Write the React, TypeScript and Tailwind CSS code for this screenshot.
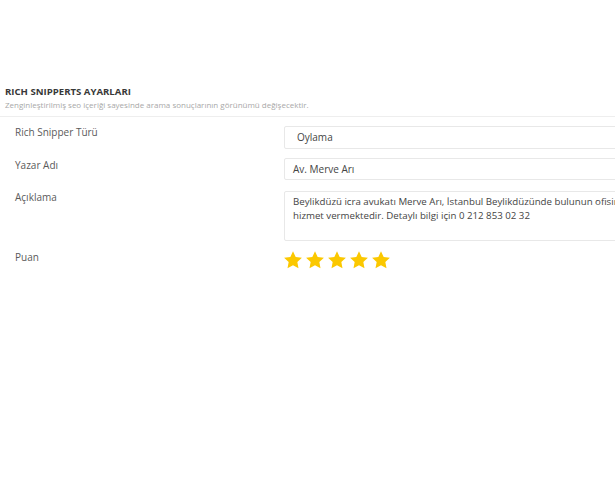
import React from 'react';

const Star: React.FC = () => (
  <svg viewBox="0 0 24 24" className="w-[20px] h-[20px]">
    <path
      d="M12 1.5l3.2 6.9 7.5.9-5.5 5.2 1.4 7.4L12 18.2l-6.6 3.7 1.4-7.4-5.5-5.2 7.5-.9z"
      fill="#fbc800"
    />
  </svg>
);

const App: React.FC = () => {
  return (
    <div
      className="w-[615px] h-[480px] overflow-hidden bg-white"
      style={{ fontFamily: '"Open Sans", "Liberation Sans", sans-serif' }}
    >
      <div className="pt-[86px]">
        <div className="pl-[5px]">
          <h3 className="text-[9.6px] leading-[12px] font-bold uppercase text-[#383838]">Rich Snipperts Ayarları</h3>
          <p className="text-[8px] leading-[11px] text-[#a8a8a8] mt-[1px]">
            Zenginleştirilmiş seo içeriği sayesinde arama sonuçlarının görünümü değişecektir.
          </p>
        </div>
        <div className="mt-[6px] border-t border-[#eeeeee]" />

        <div className="w-[800px] pt-[8px] flex flex-col">
          <div className="flex">
            <label className="w-[284px] pl-[15px] text-[10px] leading-[14px] text-[#5a5a5a] shrink-0">Rich Snipper Türü</label>
            <div className="w-[400px] h-[23px] mt-[1px] border border-[#e8e8e8] rounded-[2px] pl-[12px] flex items-center text-[10px] text-[#444]">
              Oylama
            </div>
          </div>

          <div className="flex mt-[9px]">
            <label className="w-[284px] pl-[15px] text-[10px] leading-[14px] text-[#5a5a5a] shrink-0">Yazar Adı</label>
            <div className="w-[400px] h-[22px] border border-[#e8e8e8] rounded-[2px] pl-[8px] flex items-center text-[10px] text-[#444]">
              Av. Merve Arı
            </div>
          </div>

          <div className="flex mt-[10px]">
            <label className="w-[284px] pl-[15px] text-[10px] leading-[14px] text-[#5a5a5a] shrink-0">Açıklama</label>
            <div className="w-[400px] h-[50px] mt-[1px] border border-[#e8e8e8] rounded-[2px] pl-[8px] pt-[3px] text-[9.7px] leading-[14px] text-[#444]">
              Beylikdüzü icra avukatı Merve Arı, İstanbul Beylikdüzünde bulunun ofisinde
              <br />
              hizmet vermektedir. Detaylı bilgi için 0 212 853 02 32
            </div>
          </div>

          <div className="flex mt-[9px]">
            <label className="w-[284px] pl-[15px] text-[10px] leading-[14px] text-[#5a5a5a] shrink-0">Puan</label>
            <div className="flex gap-[2px] -ml-[1px]">
              <Star />
              <Star />
              <Star />
              <Star />
              <Star />
            </div>
          </div>
        </div>
      </div>
    </div>
  );
};

export default App;
